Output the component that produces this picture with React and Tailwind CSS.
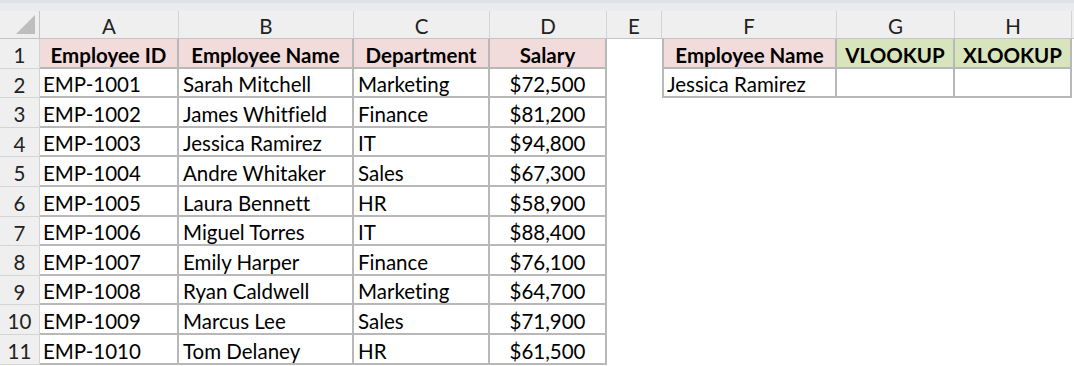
import React from 'react';

const cols = [
  { key: 'A', w: 139 },
  { key: 'B', w: 175 },
  { key: 'C', w: 136 },
  { key: 'D', w: 117 },
  { key: 'E', w: 55 },
  { key: 'F', w: 175 },
  { key: 'G', w: 118 },
  { key: 'H', w: 117 },
];

const rows = [
  ['EMP-1001', 'Sarah Mitchell', 'Marketing', '$72,500'],
  ['EMP-1002', 'James Whitfield', 'Finance', '$81,200'],
  ['EMP-1003', 'Jessica Ramirez', 'IT', '$94,800'],
  ['EMP-1004', 'Andre Whitaker', 'Sales', '$67,300'],
  ['EMP-1005', 'Laura Bennett', 'HR', '$58,900'],
  ['EMP-1006', 'Miguel Torres', 'IT', '$88,400'],
  ['EMP-1007', 'Emily Harper', 'Finance', '$76,100'],
  ['EMP-1008', 'Ryan Caldwell', 'Marketing', '$64,700'],
  ['EMP-1009', 'Marcus Lee', 'Sales', '$71,900'],
  ['EMP-1010', 'Tom Delaney', 'HR', '$61,500'],
];

const heights = [30, 29, 30, 29, 30, 30, 29, 30, 29, 30, 30];

function Cell({ w, className = '', children }) {
  return (
    <div style={{ width: w }} className={`shrink-0 h-full flex items-center pt-[4px] overflow-hidden whitespace-nowrap ${className}`}>
      {children}
    </div>
  );
}

export default function App() {
  const grid = 'border-r-2 border-b-2 border-[#b8b8b8]';
  return (
    <div className="w-[1074px] h-[366px] overflow-hidden bg-white text-black text-[20.5px] leading-none [font-variant-ligatures:none]" style={{ fontFamily: 'Lato, "Open Sans", sans-serif' }}>
      {/* ribbon edge */}
      <div className="h-[11px] bg-[#e9ebee] flex items-start">
        <div className="h-[3px] w-full bg-[#dfe3e8]" />
      </div>

      {/* column letters */}
      <div className="flex h-[28px] bg-[#efefef] border-b border-[#c4c4c4]">
        <div className="w-[40px] shrink-0 h-full border-r border-[#c4c4c4] relative">
          <svg className="absolute right-[4px] bottom-[4px]" width="19" height="19" viewBox="0 0 19 19">
            <polygon points="19,0 19,19 0,19" fill="#bdbdbd" />
          </svg>
        </div>
        {cols.map((c) => (
          <Cell key={c.key} w={c.w} className="justify-center border-r border-[#d4d4d4] text-[#222]">
            {c.key}
          </Cell>
        ))}
        <div className="flex-1" />
      </div>

      {/* rows */}
      {heights.map((h, i) => {
        const n = i + 1;
        const data = i === 0 ? null : rows[i - 1];
        return (
          <div key={n} className="flex" style={{ height: h }}>
            <Cell w={40} className="justify-center bg-[#efefef] border-r border-b border-[#d4d4d4] text-[#222]">
              {n}
            </Cell>
            {i === 0 ? (
              <>
                <Cell w={139} className={`justify-center font-bold bg-[#f2dcdb] ${grid}`}>Employee ID</Cell>
                <Cell w={175} className={`justify-center font-bold bg-[#f2dcdb] ${grid}`}>Employee Name</Cell>
                <Cell w={136} className={`justify-center font-bold bg-[#f2dcdb] ${grid}`}>Department</Cell>
                <Cell w={117} className={`justify-center font-bold bg-[#f2dcdb] ${grid}`}>Salary</Cell>
                <Cell w={55} />
                <Cell w={175} className={`justify-center font-bold bg-[#f2dcdb] ${grid} border-l-2`}>Employee Name</Cell>
                <Cell w={118} className={`justify-center font-bold bg-[#d8e4bc] ${grid}`}>VLOOKUP</Cell>
                <Cell w={117} className={`justify-center font-bold bg-[#d8e4bc] ${grid}`}>XLOOKUP</Cell>
              </>
            ) : (
              <>
                <Cell w={139} className={`pl-[3px] ${grid}`}>{data[0]}</Cell>
                <Cell w={175} className={`pl-[4px] ${grid}`}>{data[1]}</Cell>
                <Cell w={136} className={`pl-[4px] ${grid}`}>{data[2]}</Cell>
                <Cell w={117} className={`justify-center ${grid}`}>{data[3]}</Cell>
                {i === 1 && (
                  <>
                    <Cell w={55} />
                    <Cell w={175} className={`pl-[3px] ${grid} border-l-2`}>Jessica Ramirez</Cell>
                    <Cell w={118} className={grid} />
                    <Cell w={117} className={grid} />
                  </>
                )}
              </>
            )}
          </div>
        );
      })}
    </div>
  );
}
